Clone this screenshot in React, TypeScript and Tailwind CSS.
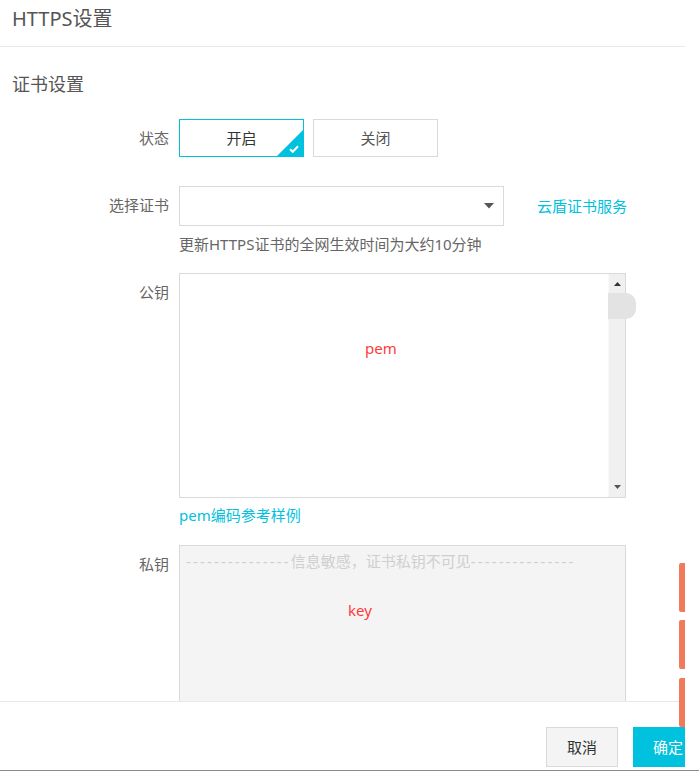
const font = { fontFamily: '"Noto Sans", "Noto Sans CJK SC", sans-serif' };

function Label({ children }: { children: React.ReactNode }) {
  return (
    <div className="w-[169px] shrink-0 text-right text-[15px] leading-[38px] text-[#666]">
      {children}
    </div>
  );
}

export default function App() {
  return (
    <div className="relative w-[699px] h-[772px] bg-white overflow-hidden" style={font}>
      <div className="w-[685px] h-[770px] flex flex-col">
        {/* header */}
        <div className="h-[47px] shrink-0 border-b border-[#e8e8e8] pl-[12px] pt-[5px]">
          <h2 className="text-[20px] leading-[28px] text-[#555]">HTTPS设置</h2>
        </div>

        {/* body */}
        <div className="flex-1 overflow-hidden pt-[25px]">
          <h3 className="pl-[12px] text-[18px] leading-[24px] text-[#555]">证书设置</h3>

          {/* status */}
          <div className="flex mt-[23px]">
            <Label>状态</Label>
            <div className="ml-[10px] flex gap-[9px]">
              <button className="relative w-[125px] h-[38px] border border-[#00c1de] text-[15px] text-[#333] bg-white">
                开启
                <span className="absolute right-0 bottom-0 w-0 h-0 border-l-[26px] border-l-transparent border-b-[26px] border-b-[#00c1de]" />
                <svg className="absolute right-[4px] bottom-[3px]" width="10" height="8" viewBox="0 0 10 8">
                  <path d="M1 4.2 L3.8 6.8 L9 1.2" stroke="white" strokeWidth="2" fill="none" />
                </svg>
              </button>
              <button className="w-[125px] h-[38px] border border-[#d9d9d9] text-[15px] text-[#555] bg-white">
                关闭
              </button>
            </div>
          </div>

          {/* cert select */}
          <div className="flex mt-[29px]">
            <Label>选择证书</Label>
            <div className="ml-[10px]">
              <div className="flex items-center">
                <div className="w-[325px] h-[40px] border border-[#d9d9d9] flex items-center justify-end pr-[9px]">
                  <svg width="10" height="6" viewBox="0 0 10 6">
                    <path d="M0 0 L10 0 L5 5.5 Z" fill="#555" />
                  </svg>
                </div>
                <a className="ml-[33px] text-[15px] text-[#00c1de]">云盾证书服务</a>
              </div>
              <p className="mt-[8px] text-[15px] leading-[20px] text-[#666]">
                更新HTTPS证书的全网生效时间为大约10分钟
              </p>
            </div>
          </div>

          {/* public key */}
          <div className="flex mt-[19px]">
            <Label>公钥</Label>
            <div className="ml-[10px]">
              <div className="relative w-[447px] h-[225px] border border-[#d9d9d9] bg-white">
                <span className="absolute left-[185px] top-[62px] text-[15px] leading-[24px] text-[#ff3b3b]">pem</span>
                <div className="absolute right-0 top-0 bottom-0 w-[17px] bg-[#f0f0f0] border-l border-[#fafafa] flex flex-col items-center justify-between py-[8px]">
                  <svg width="7" height="4" viewBox="0 0 7 4"><path d="M0 4 L3.5 0 L7 4 Z" fill="#333" /></svg>
                  <svg width="7" height="4" viewBox="0 0 7 4"><path d="M0 0 L3.5 4 L7 0 Z" fill="#555" /></svg>
                </div>
                <div className="absolute left-[428px] top-[19px] w-[28px] h-[26px] bg-[#e3e3e3] rounded-r-[10px]" />
              </div>
              <a className="block mt-[7px] text-[15px] leading-[20px] text-[#00c1de]">pem编码参考样例</a>
            </div>
          </div>

          {/* private key */}
          <div className="flex mt-[20px]">
            <Label>私钥</Label>
            <div className="ml-[10px]">
              <div className="relative w-[447px] h-[200px] border border-[#d9d9d9] bg-[#f4f4f4] pl-[6px] pt-[4px]">
                <p className="text-[15px] leading-[22px] text-[#cfcfcf] whitespace-nowrap">
                  <span className="tracking-[2.15px]">---------------</span>信息敏感，证书私钥不可见<span className="tracking-[2.15px]">---------------</span>
                </p>
                <span className="absolute left-[168px] top-[52px] text-[15px] leading-[24px] text-[#ff3b3b]">key</span>
              </div>
            </div>
          </div>
        </div>

        {/* footer */}
        <div className="h-[69px] shrink-0 border-t border-[#e8e8e8] flex justify-end items-start pt-[25px] gap-[15px] overflow-hidden">
          <button className="w-[72px] h-[40px] shrink-0 border border-[#d9d9d9] bg-[#f4f4f4] text-[15px] text-[#333]">取消</button>
          <button className="w-[72px] h-[40px] shrink-0 bg-[#00c1de] text-[15px] text-white text-left pl-[20px] mr-[-20px]">确定</button>
        </div>
      </div>
      <div className="h-px bg-[#8c8c8c]" />

      {/* floating side tabs */}
      <div className="absolute left-[679px] top-[563px] w-[6px] h-[49px] bg-[#f07a5a] rounded-l-[2px]" />
      <div className="absolute left-[679px] top-[620px] w-[6px] h-[49px] bg-[#f07a5a] rounded-l-[2px]" />
      <div className="absolute left-[679px] top-[678px] w-[6px] h-[49px] bg-[#f07a5a] rounded-l-[2px]" />
    </div>
  );
}
